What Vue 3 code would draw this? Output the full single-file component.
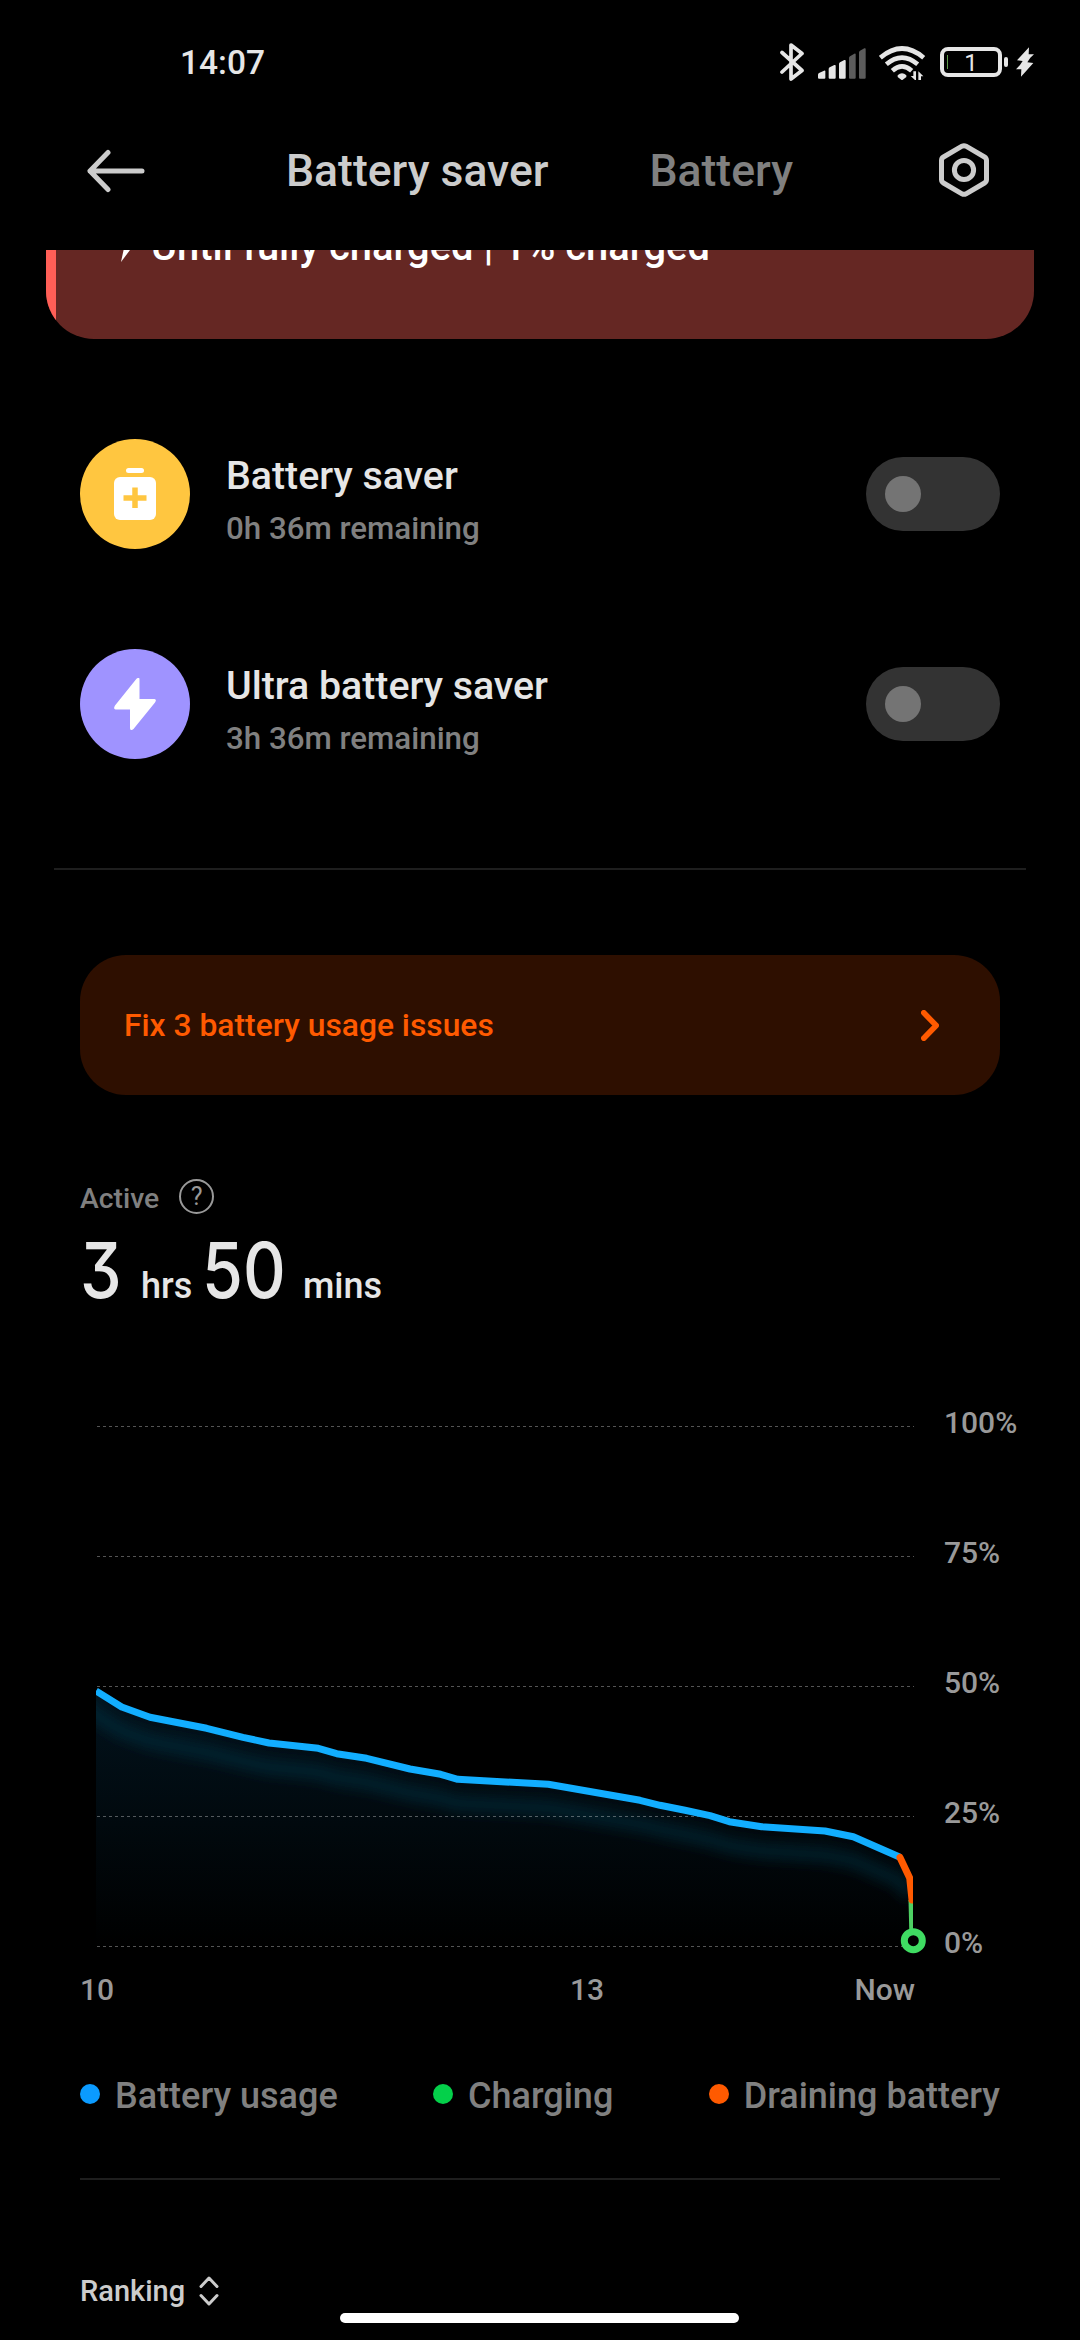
<script setup>
const modes = [
  { id: 'saver', title: 'Battery saver', note: '0h 36m remaining', color: '#ffc640' },
  { id: 'ultra', title: 'Ultra battery saver', note: '3h 36m remaining', color: '#9f93ff' },
]

const gridLines = [1426, 1556, 1686, 1816, 1946]
const levels = ['100%', '75%', '50%', '25%', '0%']

const legend = [
  { label: 'Battery usage', color: '#0b9bff' },
  { label: 'Charging', color: '#04d04a' },
  { label: 'Draining battery', color: '#ff5a00' },
]

const usage = [
  [96, 1691], [121.7, 1707], [150, 1717.3], [206.7, 1728.3], [243, 1737.3], [269, 1743],
  [318.3, 1748.3], [336.7, 1753.7], [366.7, 1758.3], [410, 1769], [440.7, 1774.3],
  [457.7, 1779.3], [548.3, 1784.3], [640, 1800.3], [660, 1805.3], [685, 1810.3],
  [710, 1815.7], [729.3, 1821.7], [761.7, 1826.7], [825, 1831], [853.3, 1836.7], [899.5, 1857],
]
const usageLine = usage.map((p) => p.join(',')).join(' ')
const usageArea = `${usageLine} 909,1878 913,1946 96,1946`
const glowLine = '60,1683 ' + usage.map(([x, y]) => `${x},${y + 24}`).join(' ') + ' 911,1895'
</script>

<template>
  <div class="screen">
    <div class="status">
      <span class="clock">14:07</span>
      <div class="indicators">
        <svg class="bt" viewBox="0 0 24 40" fill="none" stroke="#e6e6e6" stroke-width="3.7" stroke-linejoin="round" stroke-linecap="round">
          <path d="M2 10.5 22 28.5 11 37V3L22 11.5 2 30" />
        </svg>
        <svg class="signal" viewBox="0 0 143 93">
          <path fill="#e6e6e6" d="M0 80q0-3 3-5l15-7q4-1 4 2v19q0 3-3 3H3q-3 0-3-3zM32 63q0-3 3-5l14-7q4-1 4 2v36q0 3-3 3H35q-3 0-3-3zM63 48q0-3 3-5l13-7q4-1 4 2v51q0 3-3 3H66q-3 0-3-3z" />
          <path fill="#5c5c5c" d="M93 30q0-3 3-5l13-8q4-1 4 2v70q0 3-3 3H96q-3 0-3-3zM123 13q0-3 3-5l13-7q4-1 4 2v86q0 3-3 3h-14q-3 0-3-3z" />
        </svg>
        <svg class="wifi" viewBox="0 0 140 104">
          <g fill="none" stroke="#e6e6e6" stroke-width="14">
            <path d="M4 35Q69-20 134 35" />
            <path d="M22 55Q69 15 116 55" />
            <path d="M40 74Q69 48 98 74" />
          </g>
          <path fill="#e6e6e6" d="M56 88q13-12 26 0v5L69 103 56 93z" />
          <path fill="#e6e6e6" d="M103 76h8v29l-16-15h8zM118 105V76l15 15h-7v14z" />
        </svg>
        <div class="cell">
          <i class="charge"></i>
          <span>1</span>
        </div>
        <i class="nub"></i>
        <svg class="plug" viewBox="0 0 54 88">
          <path fill="#e6e6e6" d="M39 0 3 39l17 2-8 12-12 13h16L15 88l37-41-18-2 9-14 11-10H38z" />
        </svg>
      </div>
    </div>

    <header class="bar">
      <svg class="back" viewBox="0 0 60 44" fill="none" stroke="#cccccc" stroke-width="5" stroke-linecap="round" stroke-linejoin="round">
        <path d="M55 22H3M21 3.5 3 22 21 40.5" />
      </svg>
      <nav class="tabs">
        <span class="tab active">Battery saver</span>
        <span class="tab">Battery</span>
      </nav>
      <svg class="gear" viewBox="0 0 52 56" fill="none" stroke="#cccccc" stroke-width="5" stroke-linejoin="round">
        <path d="M24 4.2Q26 3.1 28 4.2L46.5 15Q48.5 16.2 48.5 18.5v19Q48.5 39.8 46.5 41L28 51.8Q26 52.9 24 51.8L5.5 41Q3.5 39.8 3.5 37.5v-19Q3.5 16.2 5.5 15z" />
        <circle cx="26" cy="28" r="9.6" />
      </svg>
    </header>

    <main class="content">
      <section class="hero">
        <i class="fill"></i>
        <div class="until">
          <svg viewBox="0 0 20 32"><path fill="#fff" d="M12 0 0 18h7L4 32 19 12h-8z" /></svg>
          <span>Until fully charged | 1% charged</span>
        </div>
      </section>

      <section class="modes">
        <div v-for="m in modes" :key="m.id" class="mode">
          <div class="badge" :style="{ background: m.color }">
            <svg v-if="m.id === 'saver'" viewBox="0 0 42 52">
              <rect x="12" y="0" width="18" height="5" rx="2.5" fill="#fff" />
              <rect x="0" y="9" width="42" height="43" rx="6" fill="#fff" />
              <path d="M21 19.5v20.5M9.5 30h23" :stroke="m.color" stroke-width="5.5" />
            </svg>
            <svg v-else viewBox="0 0 42 52">
              <path fill="#fff" d="M22.5.8Q25.5-1.500 25.500 1.500V21H40.500Q43 21.500 41 24.500L19.500 51Q16 53.500 16 50V31.500H1.500Q-1 31 1 27.500z" />
            </svg>
          </div>
          <div class="words">
            <div class="title">{{ m.title }}</div>
            <div class="note">{{ m.note }}</div>
          </div>
          <div class="toggle"><i></i></div>
        </div>
      </section>

      <hr class="rule wide" />

      <section class="issues">
        <span>Fix 3 battery usage issues</span>
        <svg viewBox="0 0 18 31" fill="none" stroke="#ff5a00" stroke-width="5.6" stroke-linecap="round" stroke-linejoin="round">
          <path d="M2.8 2.8 15.2 15.5 2.8 28.2" />
        </svg>
      </section>

      <section class="active-row">
        <span>Active</span>
        <i class="help">?</i>
      </section>
      <section class="duration">
        <span class="num three">3</span>
        <span class="unit hrs">hrs</span>
        <span class="num fifty">50</span>
        <span class="unit mins">mins</span>
      </section>

      <section class="chart">
        <svg class="plot" viewBox="80 1403 850 560">
          <defs>
            <linearGradient id="fade" gradientUnits="userSpaceOnUse" x1="0" y1="1691" x2="0" y2="1946">
              <stop offset="0" stop-color="#02131d" />
              <stop offset="1" stop-color="#000" />
            </linearGradient>
            <filter id="soft" filterUnits="userSpaceOnUse" x="40" y="1640" width="920" height="340">
              <feGaussianBlur stdDeviation="6.5" />
            </filter>
            <clipPath id="inside"><rect x="96" y="1403" width="817" height="560" /></clipPath>
            <clipPath id="under"><polygon :points="usageArea" /></clipPath>
          </defs>
          <polygon :points="usageArea" fill="url(#fade)" />
          <g clip-path="url(#under)">
            <polyline :points="glowLine" fill="none" stroke="#0b3c50" stroke-opacity="0.42" stroke-width="15" filter="url(#soft)" />
          </g>
          <line v-for="y in gridLines" :key="y" x1="97" x2="914" :y1="y + 0.5" :y2="y + 0.5" stroke="#fff" stroke-opacity="0.33" stroke-dasharray="3 3" />
          <g clip-path="url(#inside)" fill="none" stroke-width="7" stroke-linejoin="round">
            <polyline :points="usageLine" stroke="#12aeff" />
            <path d="M912 1900 913 1940" stroke="#4ed063" />
            <path d="M900 1857.5 909.7 1878 912 1900" stroke="#ff5a00" stroke-linecap="round" />
          </g>
          <circle cx="913.3" cy="1940.7" r="9" fill="#000" stroke="#3fdc62" stroke-width="7" />
        </svg>
        <div class="levels"><span v-for="l in levels" :key="l">{{ l }}</span></div>
      </section>
      <div class="hours"><span>10</span><span>13</span><span>Now</span></div>

      <section class="legend">
        <div v-for="l in legend" :key="l.label" class="key">
          <i :style="{ background: l.color }"></i><span>{{ l.label }}</span>
        </div>
      </section>

      <hr class="rule" />

      <section class="ranking">
        <span>Ranking</span>
        <svg viewBox="0 0 20 30" fill="none" stroke="#cccccc" stroke-width="3" stroke-linecap="round" stroke-linejoin="round">
          <path d="M2 10.5 10 2l8 8.5M2 19.5l8 8.5 8-8.5" />
        </svg>
      </section>
    </main>
    <div class="home"></div>
  </div>
</template>

<style>
body {
  background: #000;
}
</style>

<style scoped>
.screen {
  position: relative;
  width: 1080px;
  height: 2340px;
  overflow: hidden;
  background: #000;
  color: #e6e6e6;
  font-family: Roboto, sans-serif;
  font-weight: 500;
}
svg {
  display: block;
  flex: none;
}
.status {
  height: 126px;
  display: flex;
  align-items: center;
  justify-content: space-between;
  padding: 0 46px 0 180px;
}
.clock {
  font-size: 33.5px;
  line-height: 40px;
}
.indicators {
  display: flex;
  align-items: center;
}
.bt {
  width: 24px;
  height: 40px;
  margin-top: -2px;
}
.signal {
  width: 47.7px;
  height: 31px;
  margin: 0 13px 0 14px;
}
.wifi {
  width: 46.7px;
  height: 34.7px;
  margin: 0 14.5px 0 0;
}
.cell {
  position: relative;
  box-sizing: border-box;
  width: 62px;
  height: 30px;
  margin-top: -2px;
  border: 4px solid #e6e6e6;
  border-radius: 8px;
  display: flex;
  align-items: center;
  justify-content: center;
  font-size: 24px;
  font-weight: 400;
  line-height: 24px;
}
.cell span {
  padding-top: 2px;
}
.charge {
  position: absolute;
  left: 3px;
  top: 4px;
  width: 1px;
  height: 14px;
  background: #5c9a4a;
}
.nub {
  width: 4px;
  height: 10px;
  margin: -2px 8px 0 2px;
  border-radius: 2px;
  background: #e6e6e6;
}
.plug {
  width: 18px;
  height: 30px;
  margin-top: -2px;
}
.bar {
  height: 90px;
  padding: 0 90px 0 87px;
  margin-bottom: 34px;
  display: flex;
  align-items: center;
}
.back {
  width: 60px;
  height: 44px;
}
.tabs {
  flex: 1;
  display: flex;
  gap: 101px;
  padding-left: 139px;
}
.tab {
  font-size: 44.5px;
  line-height: 52px;
  color: #808080;
}
.tab.active {
  color: #ccc;
}
.gear {
  width: 52px;
  height: 56px;
  margin-top: -2px;
}
.content {
  height: 2090px;
  overflow: hidden;
  display: flow-root;
}
.hero {
  height: 300px;
  margin: -211px 46px 0;
  border-radius: 48px;
  background: #652723;
  display: flex;
  overflow: hidden;
}
.fill {
  width: 10px;
  background: #ff5f57;
}
.until {
  display: flex;
  align-items: flex-end;
  gap: 14px;
  padding: 0 0 70px 61px;
  color: #fff;
  font-size: 39.9px;
  line-height: 44px;
}
.until svg {
  width: 20px;
  height: 32px;
  margin-bottom: 7px;
}
.modes {
  margin: 50px 80px 0;
}
.mode {
  height: 210px;
  display: flex;
  align-items: center;
}
.badge {
  width: 110px;
  height: 110px;
  border-radius: 50%;
  display: flex;
  align-items: center;
  justify-content: center;
}
.badge svg {
  width: 42px;
  height: 52px;
}
.words {
  flex: 1;
  padding: 14px 0 0 36px;
}
.title {
  font-size: 39.3px;
  line-height: 46px;
}
.note {
  margin-top: 10px;
  font-size: 31.3px;
  line-height: 40px;
  color: #808080;
}
.toggle {
  width: 134px;
  height: 74px;
  box-sizing: border-box;
  padding: 19px;
  border-radius: 37px;
  background: #333;
}
.toggle i {
  display: block;
  width: 36px;
  height: 36px;
  border-radius: 50%;
  background: #747474;
}
.rule {
  height: 2px;
  margin: 60px 80px 0;
  border: 0;
  background: #1e1e1e;
}
.rule.wide {
  margin: 59px 54px 85px;
}
.issues {
  height: 140px;
  box-sizing: border-box;
  margin: 0 80px;
  padding: 0 61px 0 44px;
  border-radius: 46px;
  background: #2e0f00;
  color: #ff5a00;
  display: flex;
  align-items: center;
  justify-content: space-between;
  font-size: 31.8px;
}
.issues svg {
  width: 18px;
  height: 31px;
}
.active-row {
  margin: 84px 80px 0;
  height: 35px;
  display: flex;
  align-items: center;
  gap: 20px;
  font-size: 28.3px;
  line-height: 33px;
  color: #808080;
}
.active-row span {
  padding-top: 3px;
}
.help {
  box-sizing: border-box;
  width: 35px;
  height: 35px;
  border: 2px solid #999;
  border-radius: 50%;
  text-align: center;
  font: 400 25px/31px Roboto, sans-serif;
  color: #999;
}
.duration {
  height: 80px;
  margin: 16px 80px 0;
  display: flex;
  align-items: baseline;
  white-space: nowrap;
}
.num {
  font: 500 77px/80px Inter, sans-serif;
  font-feature-settings: 'cv09' 1;
  transform: scaleX(0.86);
  transform-origin: left;
}
.three {
  width: 61px;
}
.fifty {
  width: 101px;
}
.unit {
  font-size: 36px;
}
.hrs {
  width: 61px;
}
.chart {
  height: 560px;
  margin: 93px 0 0 80px;
  display: flex;
}
.plot {
  width: 850px;
  height: 560px;
  overflow: visible;
}
.levels {
  padding-left: 14px;
  display: flex;
  flex-direction: column;
  justify-content: space-between;
  font-size: 30px;
  line-height: 40px;
  color: #999;
}
.hours {
  width: 835px;
  margin: 7px 0 0 80px;
  display: grid;
  grid-template-columns: 490px 1fr auto;
  font-size: 30px;
  line-height: 40px;
  color: #999;
}
.legend {
  margin: 64px 80px 0;
  display: flex;
  justify-content: space-between;
  font-size: 36px;
  line-height: 44px;
  color: #808080;
}
.key {
  display: flex;
  align-items: center;
  gap: 15px;
}
.key i {
  width: 20px;
  height: 20px;
  margin-top: -5px;
  border-radius: 50%;
}
.ranking {
  margin: 91px 80px 0;
  display: flex;
  align-items: center;
  gap: 14px;
  font-size: 29px;
  line-height: 40px;
  color: #ccc;
}
.ranking svg {
  width: 20px;
  height: 30px;
}
.home {
  position: absolute;
  left: 340px;
  top: 2313px;
  width: 399px;
  height: 10px;
  border-radius: 5px;
  background: #fff;
}
</style>
